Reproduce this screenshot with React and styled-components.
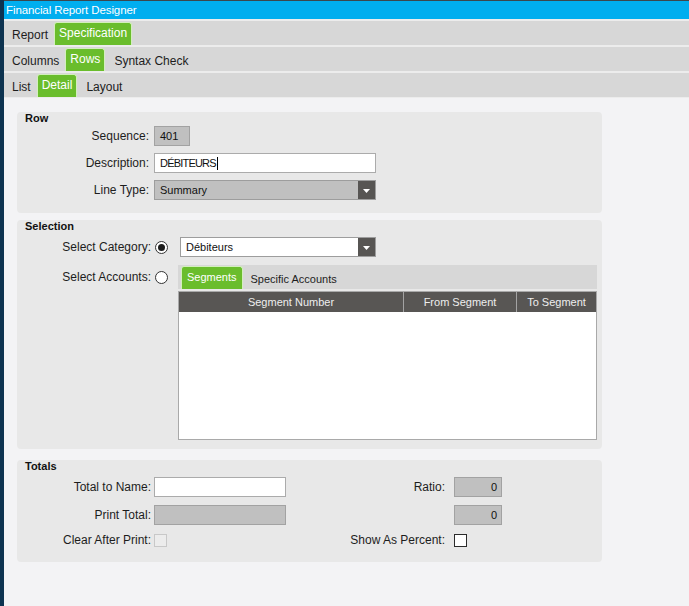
import React from 'react'
import styled, { createGlobalStyle } from 'styled-components'

const GlobalStyle = createGlobalStyle`
  html, body {
    margin: 0;
    padding: 0;
  }
  body {
    background: #f3f3f5;
    font-family: "Liberation Sans", Arial, sans-serif;
    color: #1d1d1d;
  }
`

const Frame = styled.div`
  display: flex;
  min-height: 100vh;
`

const SideStrip = styled.div`
  width: 4px;
  flex-shrink: 0;
  background: #0d3350;
`

const Main = styled.div`
  flex: 1;
  display: flex;
  flex-direction: column;
  border-top: 1px solid #3b474d;
`

const TitleBar = styled.div`
  height: 18px;
  line-height: 18px;
  padding-left: 2px;
  background: #00aeef;
  color: #fff;
  font-size: 11.5px;
  letter-spacing: -0.1px;
`

const Bars = styled.div`
  display: flex;
  flex-direction: column;
  gap: 2px;
  padding: 2px 0 1px;
  background: #ececec;
`

const TabBar = styled.div`
  display: flex;
  align-items: flex-end;
  height: 24px;
  padding-left: ${p => p.$inset}px;
  background: #d7d7d7;
  font-size: ${p => (p.$small ? 11 : 12)}px;
`

const TabItem = styled.div`
  box-sizing: border-box;
  height: 24px;
  padding: 4px 4px 0;
  line-height: 20px;
  color: #1d1d1d;
  white-space: nowrap;
`

const ActiveTab = styled.div`
  box-sizing: border-box;
  height: 23px;
  margin: 0 ${p => (p.$small ? 4 : 5)}px 0 ${p => (p.$small ? 3 : 2)}px;
  padding: 0 ${p => (p.$small ? 5 : 4)}px;
  line-height: ${p => (p.$small ? 20 : 21)}px;
  background: #6abd2c;
  border: 1px solid #d3efbd;
  border-bottom: none;
  border-radius: 3px 3px 0 0;
  color: #fff;
  white-space: nowrap;
`

const Content = styled.div`
  flex: 1;
  display: flex;
  flex-direction: column;
  padding: 14px 0 0 13px;
`

const Panel = styled.section`
  box-sizing: border-box;
  width: 585px;
  margin-top: ${p => p.$gap || 0}px;
  padding: 0 8px ${p => p.$bottom}px;
  background: #e8e8e8;
  border-radius: 4px;
`

const PanelTitle = styled.h4`
  margin: 0;
  font-size: 11px;
  font-weight: bold;
  line-height: 13px;
  color: #111;
`

const FieldGrid = styled.div`
  display: grid;
  grid-template-columns: ${p => p.$cols};
  row-gap: ${p => p.$rowGap}px;
  align-items: center;
  margin-top: ${p => p.$top}px;
`

const Label = styled.label`
  font-size: 12px;
  text-align: right;
  white-space: nowrap;
  padding-right: ${p => p.$pad ?? 5}px;
  color: #1d1d1d;
`

const TallCell = styled.div`
  display: flex;
  align-items: center;
  justify-content: ${p => (p.$end ? 'flex-end' : 'flex-start')};
  align-self: start;
  height: 24px;
`

const Field = styled.div`
  box-sizing: border-box;
  width: ${p => p.$w}px;
  height: 20px;
  padding: 0 4px 0 5px;
  border: 1px solid ${p => (p.$muted ? '#a2a2a2' : '#ababab')};
  background: ${p => (p.$muted ? '#c0c0c0' : '#fff')};
  font-size: 11px;
  line-height: 18px;
  text-align: ${p => (p.$right ? 'right' : 'left')};
  color: #111;
  white-space: nowrap;
`

const Condensed = styled.span`
  letter-spacing: -0.8px;
`

const Caret = styled.span`
  display: inline-block;
  width: 1px;
  height: 13px;
  margin-left: 1px;
  vertical-align: -3px;
  background: #000;
`

const SelectBox = styled.div`
  box-sizing: border-box;
  display: flex;
  width: ${p => p.$w}px;
  height: 20px;
  margin-left: ${p => p.$shift || 0}px;
  border: 1px solid #9d9d9d;
  background: ${p => (p.$muted ? '#c0c0c0' : '#fff')};
`

const SelectValue = styled.div`
  flex: 1;
  padding-left: 5px;
  font-size: 11px;
  line-height: 18px;
  color: #111;
`

const SelectButton = styled.div`
  width: 17px;
  display: flex;
  align-items: center;
  justify-content: center;
  padding-top: 1px;
  box-sizing: border-box;
  background: #575553;
`

const Radio = styled.span`
  box-sizing: border-box;
  display: flex;
  align-items: center;
  justify-content: center;
  width: 13px;
  height: 13px;
  border: 1px solid #333;
  border-radius: 50%;
  background: #fff;
  &::after {
    content: '';
    width: 7px;
    height: 7px;
    border-radius: 50%;
    background: ${p => (p.$checked ? '#1b1b1b' : 'transparent')};
  }
`

const Check = styled.span`
  box-sizing: border-box;
  display: block;
  width: 13px;
  height: 13px;
  border: 1px solid ${p => (p.$disabled ? '#c8c8c8' : '#2b2b2b')};
  background: ${p => (p.$disabled ? '#ececec' : '#fff')};
`

const Accounts = styled.div`
  display: flex;
  flex-direction: column;
  gap: 2px;
`

const Table = styled.div`
  box-sizing: border-box;
  height: 149px;
  border: 1px solid #a9a9a9;
  background: #fff;
`

const HeadRow = styled.div`
  display: grid;
  grid-template-columns: 224px 113px 1fr;
  height: 20px;
  background: #585654;
`

const HeadCell = styled.div`
  font-size: 11px;
  line-height: 20px;
  text-align: center;
  color: #eeeeee;
  & + & {
    border-left: 1px solid #a3a3a3;
  }
`

const Spacer = styled.div``

const Arrow = () => (
  <svg width="7" height="4" viewBox="0 0 7 4">
    <polygon points="0,0 7,0 3.5,4" fill="#fff" />
  </svg>
)

const Select = ({ value, width, muted, shift }) => (
  <SelectBox $w={width} $muted={muted} $shift={shift}>
    <SelectValue>{value}</SelectValue>
    <SelectButton>
      <Arrow />
    </SelectButton>
  </SelectBox>
)

const Tabs = ({ items, active, small, inset }) => (
  <TabBar $small={small} $inset={inset}>
    {items.map((t, i) =>
      i === active ? (
        <ActiveTab key={t} $small={small}>{t}</ActiveTab>
      ) : (
        <TabItem key={t}>{t}</TabItem>
      )
    )}
  </TabBar>
)

export default function App() {
  return (
    <Frame>
      <GlobalStyle />
      <SideStrip />
      <Main>
        <TitleBar>Financial Report Designer</TitleBar>
        <Bars>
          <Tabs items={['Report', 'Specification']} active={1} inset={4} />
          <Tabs items={['Columns', 'Rows', 'Syntax Check']} active={1} inset={4} />
          <Tabs items={['List', 'Detail', 'Layout']} active={1} inset={4} />
        </Bars>
        <Content>
          <Panel $bottom={13}>
            <PanelTitle>Row</PanelTitle>
            <FieldGrid $cols="129px auto" $rowGap={7} $top={1}>
              <Label>Sequence:</Label>
              <Field $w={36} $muted>401</Field>
              <Label>Description:</Label>
              <Field $w={222}>
                <Condensed>DÉBITEURS</Condensed>
                <Caret />
              </Field>
              <Label>Line Type:</Label>
              <Select value="Summary" width={222} muted />
            </FieldGrid>
          </Panel>

          <Panel $gap={7} $bottom={9}>
            <PanelTitle>Selection</PanelTitle>
            <FieldGrid $cols="130px 23px 419px" $rowGap={8} $top={4}>
              <Label $pad={4}>Select Category:</Label>
              <Radio $checked />
              <Select value="Débiteurs" width={196} shift={2} />
              <TallCell $end>
                <Label $pad={4}>Select Accounts:</Label>
              </TallCell>
              <TallCell>
                <Radio />
              </TallCell>
              <Accounts>
                <Tabs items={['Segments', 'Specific Accounts']} active={0} small inset={0} />
                <Table>
                  <HeadRow>
                    <HeadCell>Segment Number</HeadCell>
                    <HeadCell>From Segment</HeadCell>
                    <HeadCell>To Segment</HeadCell>
                  </HeadRow>
                </Table>
              </Accounts>
            </FieldGrid>
          </Panel>

          <Panel $gap={11} $bottom={15}>
            <PanelTitle>Totals</PanelTitle>
            <FieldGrid $cols="129px 132px 168px 48px" $rowGap={8} $top={4}>
              <Label $pad={3}>Total to Name:</Label>
              <Field $w={132} />
              <Label $pad={9}>Ratio:</Label>
              <Field $w={48} $muted $right>0</Field>

              <Label $pad={3}>Print Total:</Label>
              <Field $w={132} $muted />
              <Spacer />
              <Field $w={48} $muted $right>0</Field>

              <Label $pad={3}>Clear After Print:</Label>
              <Check $disabled />
              <Label $pad={9}>Show As Percent:</Label>
              <Check />
            </FieldGrid>
          </Panel>
        </Content>
      </Main>
    </Frame>
  )
}
